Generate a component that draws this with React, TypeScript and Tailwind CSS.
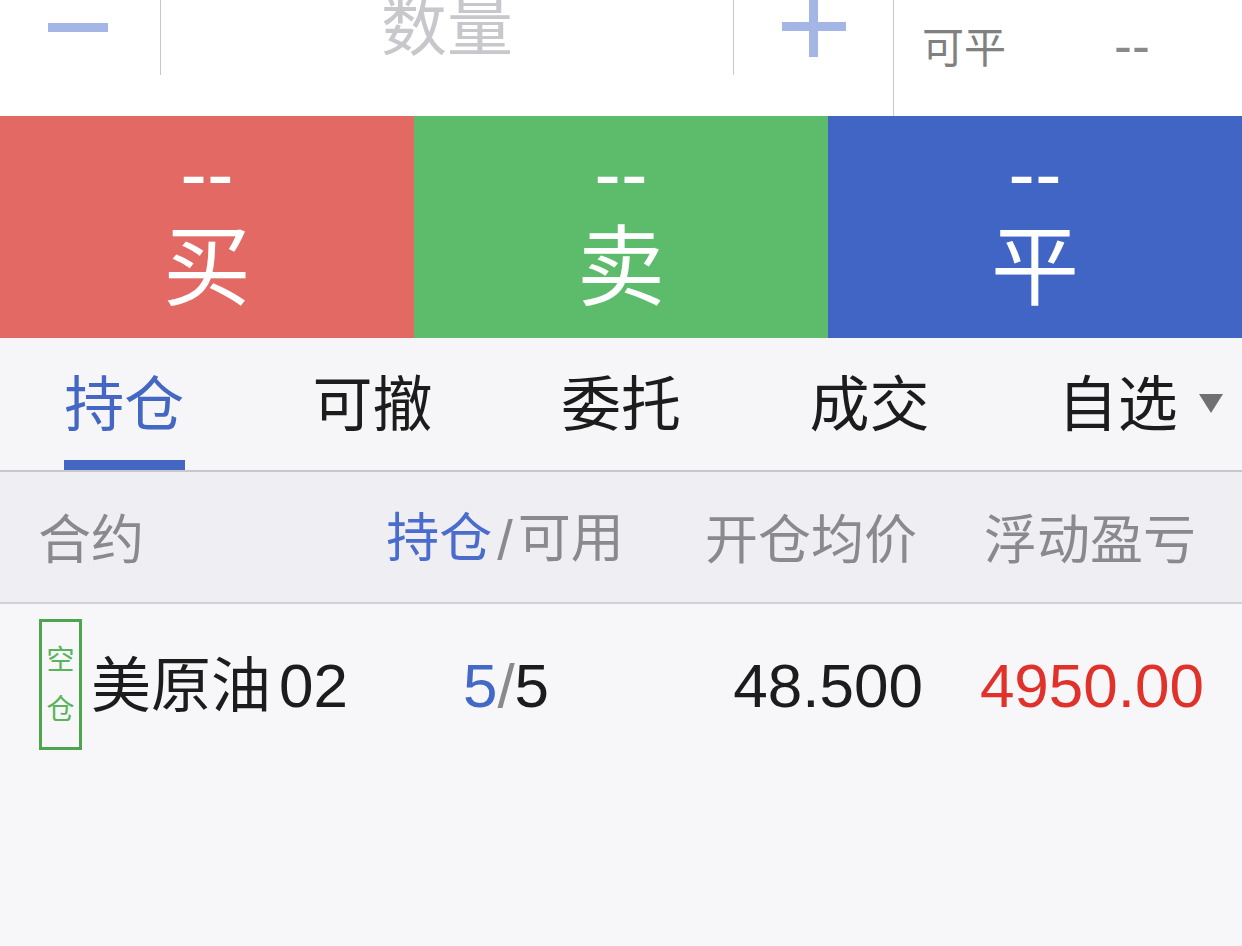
import React from "react";

const tabs = ["持仓", "可撤", "委托", "成交", "自选"];

const actions = [
  { label: "买", bg: "bg-[#e36a64]" },
  { label: "卖", bg: "bg-[#5cbc6c]" },
  { label: "平", bg: "bg-[#4065c4]" },
];

function QuantityBar() {
  return (
    <div className="flex h-[116px] bg-white">
      <div className="flex w-[893px] items-start">
        <div className="h-[75px] w-[160px] pl-[48px] pt-[23px]">
          <div className="h-[9px] w-[60px] bg-[#a3b6e6]" />
        </div>
        <div className="h-[75px] w-px bg-[#c8c8cc]" />
        <div className="flex h-[75px] flex-1 justify-center">
          <span className="mt-[-6px] text-[66px] leading-none text-[#c8c8cc]">数量</span>
        </div>
        <div className="h-[75px] w-px bg-[#c8c8cc]" />
        <div className="flex h-[75px] w-[159px] justify-center">
          <svg width="64" height="57" viewBox="0 0 64 57" className="ml-[1px]">
            <rect x="0" y="22" width="64" height="9" fill="#a3b6e6" />
            <rect x="27" y="0" width="9" height="57" fill="#a3b6e6" />
          </svg>
        </div>
      </div>
      <div className="flex flex-1 items-start border-l border-[#c8c8cc] pl-[28px]">
        <span className="mt-[28px] text-[42px] leading-none text-[#808080]">可平</span>
        <span className="ml-[108px] mt-[18px] text-[54px] leading-none text-[#8a8a8a]">--</span>
      </div>
    </div>
  );
}

function ActionButtons() {
  return (
    <div className="flex h-[222px]">
      {actions.map((a) => (
        <div key={a.label} className={`flex flex-1 flex-col items-center pt-[18px] text-white ${a.bg}`}>
          <span className="h-[80px] text-[80px] leading-none">--</span>
          <span className="mt-[10px] text-[88px] leading-none">{a.label}</span>
        </div>
      ))}
    </div>
  );
}

function TabBar() {
  return (
    <div className="grid h-[134px] grid-cols-5 border-b-2 border-[#c8c8cc] bg-[#f6f6f8]">
      {tabs.map((t, i) => (
        <div key={t} className="relative flex flex-col items-center pt-[38px]">
          <span
            className={`relative text-[60px] leading-none ${i === 0 ? "text-[#4467c4]" : "text-[#1c1c1c]"}`}
          >
            {t}
            {i === 4 && (
              <svg width="24" height="19" viewBox="0 0 24 19" className="absolute left-full top-[18px] ml-[21px]">
                <polygon points="0,0 24,0 12,19" fill="#707072" />
              </svg>
            )}
          </span>
          {i === 0 && <div className="absolute bottom-0 h-[10px] w-[121px] bg-[#4467c4]" />}
        </div>
      ))}
    </div>
  );
}

function PositionHeader() {
  return (
    <div className="flex h-[132px] items-center border-b-2 border-[#d2d2d6] bg-[#efeff3] pl-[38px] pt-[6px] text-[53px] leading-none text-[#8a8a8e]">
      <div className="w-[322px]">合约</div>
      <div className="flex w-[290px] justify-center">
        <span className="text-[#4a6ccc]">持仓</span>
        <span className="mx-[5px] text-[56px]">/</span>
        <span>可用</span>
      </div>
      <div className="w-[272px] pr-[5px] text-right">开仓均价</div>
      <div className="flex-1 pr-[46px] text-right">浮动盈亏</div>
    </div>
  );
}

function PositionRow() {
  return (
    <div className="flex items-center pl-[39px] pt-[15px]">
      <div className="flex h-[131px] w-[43px] flex-col items-center border-[3px] border-[#4ea64c] pt-[25px] text-[28px] leading-none text-[#5ab45a]">
        <span>空</span>
        <span className="mt-[21px]">仓</span>
      </div>
      <div className="ml-[9px] mt-[3px] w-[270px] text-[60px] leading-none text-[#1c1c1c]">
        美原油<span className="ml-[8px] text-[62px]">02</span>
      </div>
      <div className="mt-[3px] flex w-[290px] justify-center text-[62px] leading-none">
        <span className="text-[#4468c8]">5</span>
        <span className="text-[#8a8a8e]">/</span>
        <span className="text-[#1c1c1c]">5</span>
      </div>
      <div className="mt-[3px] w-[272px] text-right text-[62px] leading-none text-[#1c1c1c]">48.500</div>
      <div className="mt-[3px] flex-1 pr-[38px] text-right text-[62px] leading-none text-[#e0322b]">4950.00</div>
    </div>
  );
}

export default function App() {
  return (
    <div className="h-[946px] w-[1242px] overflow-hidden bg-[#f7f7f9] font-[family-name:'Liberation_Sans','Noto_Sans_CJK_SC',sans-serif]">
      <QuantityBar />
      <ActionButtons />
      <TabBar />
      <PositionHeader />
      <PositionRow />
    </div>
  );
}
